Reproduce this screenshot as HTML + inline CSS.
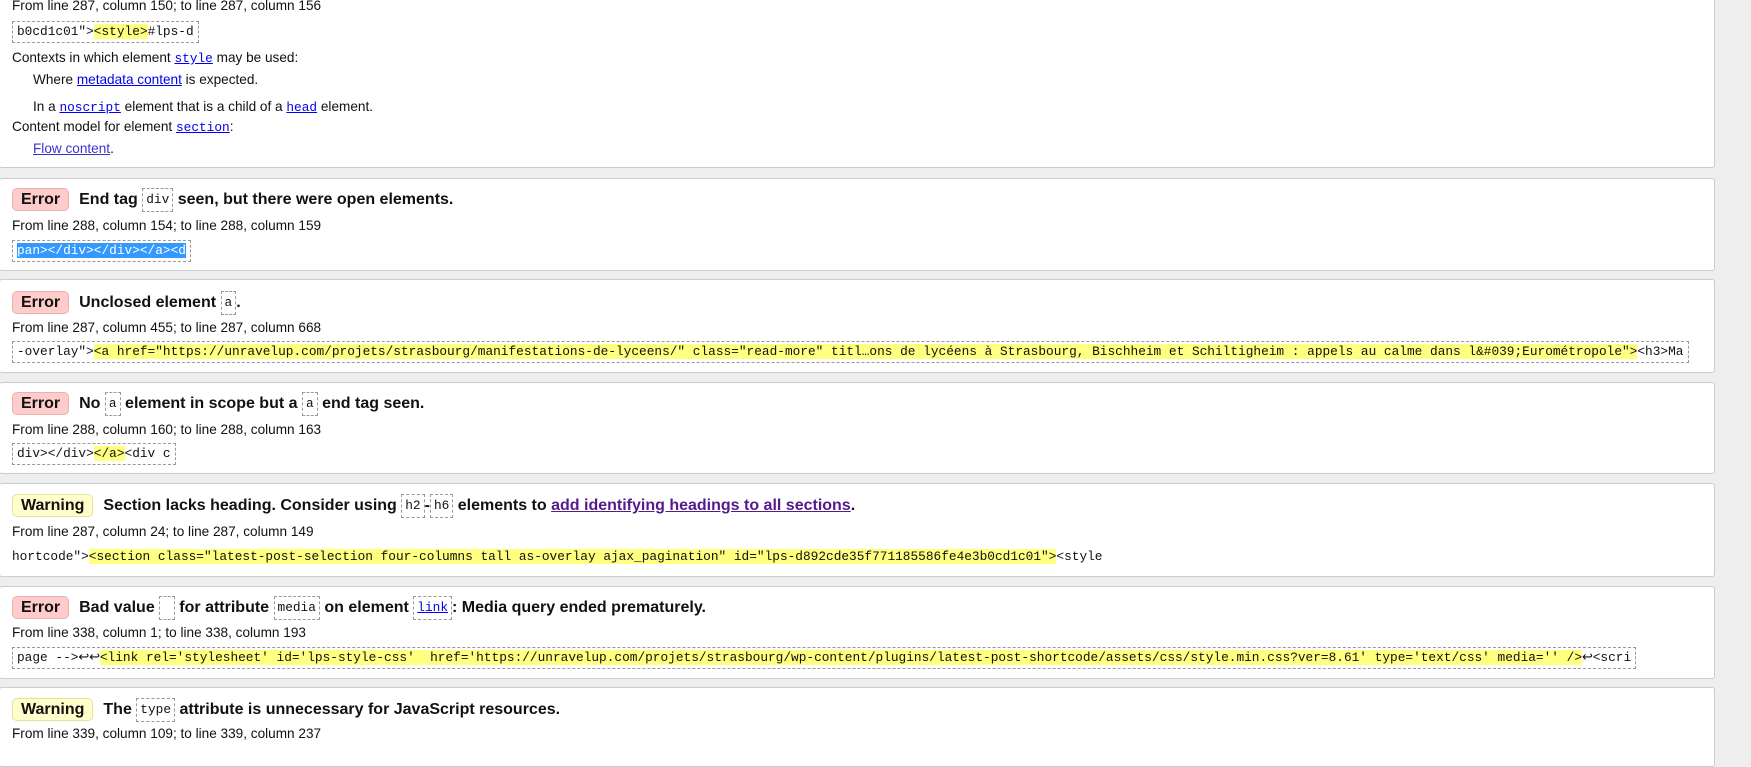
<!DOCTYPE html>
<html><head><meta charset="utf-8"><style>
body{margin:0;width:1751px;height:740px;background:#eee;overflow:hidden;position:relative;font-family:"Liberation Sans",Arial,sans-serif;color:#111;font-size:13.6px}
.card{position:absolute;left:-1px;width:1716px;background:#fff;border:1px solid #ccc;border-radius:3px;box-sizing:border-box}
.l{position:absolute;left:12px;height:22px;line-height:22px;white-space:nowrap}
.h{font-weight:bold;font-size:16px}
.b{display:inline-block;padding:0 8px;border-radius:5px;height:21px;line-height:21px;margin-right:10px;font-weight:bold;font-size:16px}
.err{background:#fcc;border:1px solid #e8b0b0}
.warn{background:#ffc;border:1px solid #e6e0a0}
code,.m{font-family:"Liberation Mono",monospace;font-size:12.8px;font-weight:normal}
.ic{display:inline-block;border:1px dashed #999;padding:0 3px;height:22px;line-height:22px;vertical-align:middle}
.box{position:absolute;left:12px;height:20px;line-height:20px;border:1px dashed #999;padding:0 4px;white-space:pre;overflow:hidden}
.y{background:#ffff80}
.s{background:#3399ff;color:#fff}
a{color:#00e;text-decoration:underline}
.v{color:#551a8b}
</style></head><body>

<div class="card" style="top:-20px;height:188px">
 <div class="l" style="top:14px">From line 287, column 150; to line 287, column 156</div>
 <div class="box m" style="top:40px">b0cd1c01"&gt;<span class="y">&lt;style&gt;</span>#lps-d</div>
 <div class="l" style="top:66px">Contexts in which element <a class="m" style="font-size:12.8px">style</a> may be used:</div>
 <div class="l" style="top:88px;left:33px">Where <a>metadata content</a> is expected.</div>
 <div class="l" style="top:115px;left:33px">In a <a class="m">noscript</a> element that is a child of a <a class="m">head</a> element.</div>
 <div class="l" style="top:135px">Content model for element <a class="m">section</a>:</div>
 <div class="l" style="top:157px;left:33px"><a style="color:#4030d0">Flow content</a>.</div>
</div>

<div class="card" style="top:178px;height:93px">
 <div class="l h" style="top:9px"><span class="b err">Error</span>End tag <code class="ic">div</code> seen, but there were open elements.</div>
 <div class="l" style="top:36px">From line 288, column 154; to line 288, column 159</div>
 <div class="box m" style="top:61px"><span class="s">pan&gt;&lt;/div&gt;&lt;/div&gt;&lt;/a&gt;&lt;d</span></div>
</div>

<div class="card" style="top:279px;height:94px">
 <div class="l h" style="top:11px"><span class="b err">Error</span>Unclosed element <code class="ic">a</code>.</div>
 <div class="l" style="top:37px">From line 287, column 455; to line 287, column 668</div>
 <div class="box m" style="top:61px;width:1667px">-overlay"&gt;<span class="y">&lt;a href="https://unravelup.com/projets/strasbourg/manifestations-de-lyceens/" class="read-more" titl…ons de lycéens à Strasbourg, Bischheim et Schiltigheim : appels au calme dans l&amp;#039;Eurométropole"&gt;</span>&lt;h3&gt;Ma</div>
</div>

<div class="card" style="top:382px;height:92px">
 <div class="l h" style="top:9px"><span class="b err">Error</span>No <code class="ic">a</code> element in scope but a <code class="ic">a</code> end tag seen.</div>
 <div class="l" style="top:36px">From line 288, column 160; to line 288, column 163</div>
 <div class="box m" style="top:60px">div&gt;&lt;/div&gt;<span class="y">&lt;/a&gt;</span>&lt;div c</div>
</div>

<div class="card" style="top:483px;height:94px">
 <div class="l h" style="top:10px"><span class="b warn">Warning</span>Section lacks heading. Consider using <code class="ic">h2</code>-<code class="ic">h6</code> elements to <a class="v">add identifying headings to all sections</a>.</div>
 <div class="l" style="top:37px">From line 287, column 24; to line 287, column 149</div>
 <div class="l m" style="top:62px">hortcode"&gt;<span class="y">&lt;section class="latest-post-selection four-columns tall as-overlay ajax_pagination" id="lps-d892cde35f771185586fe4e3b0cd1c01"&gt;</span>&lt;style</div>
</div>

<div class="card" style="top:586px;height:93px">
 <div class="l h" style="top:9px"><span class="b err">Error</span>Bad value <code class="ic">&nbsp;</code> for attribute <code class="ic">media</code> on element <code class="ic"><a>link</a></code>: Media query ended prematurely.</div>
 <div class="l" style="top:35px">From line 338, column 1; to line 338, column 193</div>
 <div class="box m" style="top:60px">page --&gt;↩↩<span class="y">&lt;link rel='stylesheet' id='lps-style-css'  href='https://unravelup.com/projets/strasbourg/wp-content/plugins/latest-post-shortcode/assets/css/style.min.css?ver=8.61' type='text/css' media='' /&gt;</span>↩&lt;scri</div>
</div>

<div class="card" style="top:687px;height:80px">
 <div class="l h" style="top:10px"><span class="b warn">Warning</span>The <code class="ic">type</code> attribute is unnecessary for JavaScript resources.</div>
 <div class="l" style="top:35px">From line 339, column 109; to line 339, column 237</div>
</div>

</body></html>
